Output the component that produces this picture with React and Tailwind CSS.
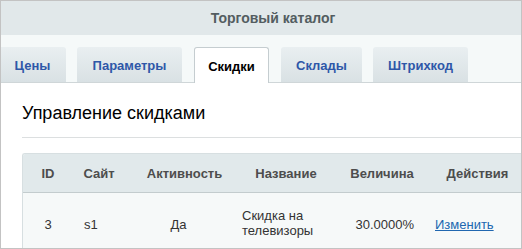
import React from 'react'

const TABS = [
  { label: 'Цены', width: 'w-[67px]', gap: 'mr-[11px]', offset: '-ml-[2px]' },
  { label: 'Параметры', width: 'w-[105px]', gap: 'mr-[12px]' },
  { label: 'Скидки', width: 'w-[75px]', gap: 'mr-[12px]', active: true },
  { label: 'Склады', width: 'w-[81px]', gap: 'mr-[11px]' },
  { label: 'Штрихкод', width: 'w-[95px]', gap: '' },
]

function Tab({ tab }) {
  if (tab.active) {
    return (
      <div
        className={`${tab.width} ${tab.gap} -mb-px flex h-[36px] items-center justify-center rounded-t-[3px] border border-b-0 border-[#c5cdd0] bg-white pt-[3px] text-[13px] font-bold text-black`}
      >
        {tab.label}
      </div>
    )
  }
  return (
    <div
      className={`${tab.width} ${tab.gap} ${tab.offset ?? ''} flex h-[35px] items-center justify-center rounded-t-[3px] bg-gradient-to-b from-[#e9eff1] to-[#d9e1e4] pt-[3px] text-[13px] font-bold text-[#2e57a8]`}
    >
      {tab.label}
    </div>
  )
}

export default function App() {
  return (
    <div className="h-[249px] w-[522px] overflow-hidden border border-[#c3c3c3] bg-white font-['Liberation_Sans',Arial,sans-serif]">
      <div className="flex h-[34px] items-center justify-center bg-[#e1e8ea] pl-[24px] text-[14px] font-bold text-[#535d61]">
        Торговый каталог
      </div>

      <div className="flex h-[48px] items-end border-b border-[#cfd6d8] bg-[#f5f9f9]">
        {TABS.map((tab) => (
          <Tab key={tab.label} tab={tab} />
        ))}
      </div>

      <div className="pl-[21px] pt-[18px]">
        <h1 className="text-[18px] leading-[24px] text-black">Управление скидками</h1>
        <div className="mt-[12px] border-t border-[#dcdfe0]" />

        <div className="mt-[15px] w-[520px] overflow-hidden rounded-tl-[3px] border-l border-t border-[#d7dfe1] text-[13px]">
          <div className="flex h-[39px] items-center border-b border-[#c3ccce] bg-[#e1e9eb] pt-[1px] font-bold text-[#4d4d4d]">
            <div className="w-[50px] text-center">ID</div>
            <div className="w-[52px] text-center">Сайт</div>
            <div className="w-[111px] pl-[8px] text-center">Активность</div>
            <div className="w-[98px] pl-[2px] text-center">Название</div>
            <div className="w-[91px] pl-[5px] text-center">Величина</div>
            <div className="w-[105px] text-center">Действия</div>
          </div>
          <div className="flex h-[70px] items-start bg-[#f6f9f9] pt-[15px] text-[#333]">
            <div className="w-[50px] pt-[7px] text-center">3</div>
            <div className="w-[52px] pl-[11px] pt-[7px]">s1</div>
            <div className="w-[111px] pr-[4px] pt-[7px] text-center">Да</div>
            <div className="w-[98px] pl-[6px] leading-[15px]">
              Скидка на
              <br />
              телевизоры
            </div>
            <div className="w-[91px] pr-[11px] pt-[7px] text-right">30.0000%</div>
            <div className="w-[105px] pl-[10px] pt-[7px]">
              <a href="#" className="text-[#2067b0] underline">
                Изменить
              </a>
            </div>
          </div>
        </div>
      </div>
    </div>
  )
}
